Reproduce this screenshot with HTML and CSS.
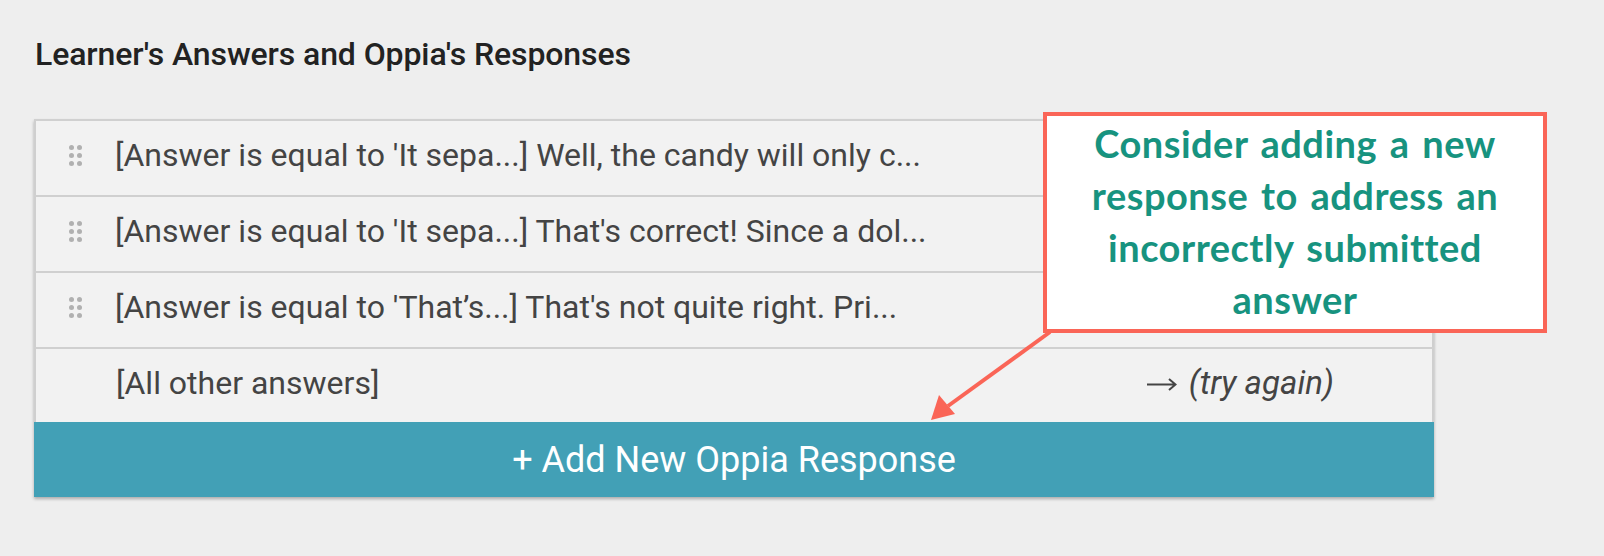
FILE: index.html
```html
<!DOCTYPE html>
<html>
<head>
<meta charset="utf-8">
<link rel="stylesheet" href="styles.css">
</head>
<body>
<div class="page">
  <h2 class="heading">Learner's Answers and Oppia's Responses</h2>
  <div class="editor">
    <div class="list">
      <div class="row">
        <span class="handle"><i></i><i></i><i></i><i></i><i></i><i></i></span>
        <span class="text">[Answer is equal to 'It sepa...] Well, the candy will only c...</span>
      </div>
      <div class="row">
        <span class="handle"><i></i><i></i><i></i><i></i><i></i><i></i></span>
        <span class="text">[Answer is equal to 'It sepa...] That's correct! Since a dol...</span>
      </div>
      <div class="row">
        <span class="handle"><i></i><i></i><i></i><i></i><i></i><i></i></span>
        <span class="text">[Answer is equal to 'That’s...] That's not quite right. Pri...</span>
      </div>
      <div class="row row-default">
        <span class="handle handle-empty"></span>
        <span class="text">[All other answers]</span>
        <span class="dest"><svg class="dest-arrow" width="31" height="14" viewBox="0 0 31 14"><path d="M1 7.5 H29 M23 2 L29.5 7.5 L23 13" fill="none" stroke="#444" stroke-width="2"/></svg><em>(try again)</em></span>
      </div>
      <button class="add-btn">+ Add New Oppia Response</button>
    </div>
    <div class="callout">Consider adding a new response to address an incorrectly submitted answer</div>
    <svg class="pointer" width="140" height="100" viewBox="0 0 140 100">
      <line x1="122" y1="2" x2="20" y2="76" stroke="#fa6557" stroke-width="4"/>
      <polygon points="3,90 11,65 27,84" fill="#fa6557"/>
    </svg>
  </div>
</div>
</body>
</html>
```
FILE: styles.css
```css
html, body {
  margin: 0;
  padding: 0;
}
body {
  background: #eeeeee;
  width: 1604px;
  height: 556px;
  overflow: hidden;
  font-family: Roboto, "Liberation Sans", sans-serif;
}
.page {
  padding: 34px 0 0 34px;
}
.heading {
  margin: 0 0 0 1px;
  font-family: Roboto, "Liberation Sans", sans-serif;
  font-weight: 500;
  font-size: 32px;
  line-height: 40px;
  color: #222222;
  letter-spacing: -0.1px;
}
.editor {
  position: relative;
  margin-top: 45px;
}
.list {
  width: 1400px;
  box-shadow: 0 2px 3px rgba(0,0,0,0.28);
}
.row {
  box-sizing: border-box;
  display: flex;
  align-items: center;
  height: 76px;
  padding-bottom: 6px;
  background: #f2f2f2;
  border-top: 2px solid #d0d0d0;
  border-left: 2px solid #cfcfcf;
  border-right: 2px solid #cfcfcf;
  color: #444444;
  font-size: 32px;
}
.row-default {
  height: 75px;
}
.handle {
  display: grid;
  grid-template-columns: 5px 5px;
  grid-auto-rows: 5px;
  gap: 3px 3px;
  width: 13px;
  margin: 0 33px;
}
.handle i {
  display: block;
  width: 5px;
  height: 5px;
  border-radius: 50%;
  background: #b0b0b0;
}
.handle-empty {
  height: 21px;
}
.text {
  flex: 1;
  white-space: nowrap;
}
.row-default .text {
  padding-left: 1px;
}
.dest {
  display: flex;
  align-items: center;
  gap: 12px;
  margin-right: 98px;
  white-space: nowrap;
  font-size: 33px;
}
.dest-arrow {
  display: block;
  margin-top: 2px;
}
.dest em {
  font-style: italic;
}
.add-btn {
  display: block;
  width: 100%;
  height: 75px;
  margin: 0;
  border: none;
  background: #42a0b6;
  color: #ffffff;
  font-family: Roboto, "Liberation Sans", sans-serif;
  font-size: 36px;
  padding: 0;
  text-align: center;
}
.callout {
  position: absolute;
  left: 1009px;
  top: -7px;
  box-sizing: content-box;
  width: 456px;
  height: 209px;
  padding: 0 20px 4px;
  border: 4px solid #fa6557;
  background: #ffffff;
  color: #17937f;
  font-family: Lato, "Open Sans", sans-serif;
  font-weight: 700;
  font-size: 38px;
  line-height: 52px;
  letter-spacing: 0.5px;
  word-spacing: 3px;
  text-align: center;
  display: flex;
  align-items: center;
  justify-content: center;
}
.pointer {
  position: absolute;
  left: 894px;
  top: 211px;
}
```
